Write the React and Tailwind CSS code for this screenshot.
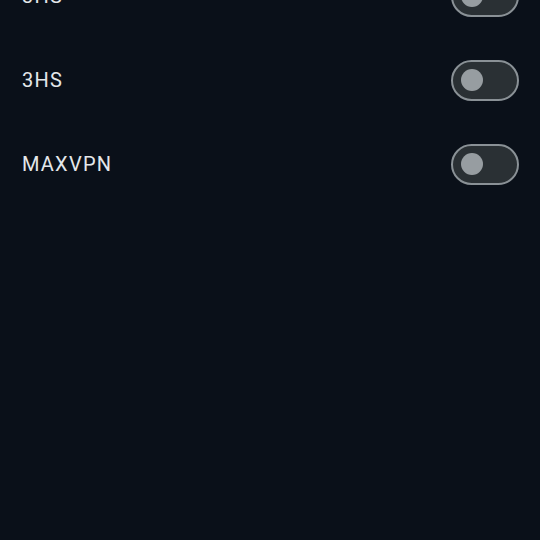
import React, { useState } from "react";

const ITEMS = [
  { id: "a", name: "3HS" },
  { id: "b", name: "3HS" },
  { id: "c", name: "MAXVPN" },
];

const Toggle = ({ on, onClick }) => (
  <button
    onClick={onClick}
    className={`w-[68px] h-[41px] rounded-full border-2 flex items-center px-[8px] ${
      on ? "border-[#7fb0d8] bg-[#2d4a60] justify-end" : "border-[#8a9196] bg-[#2a3034] justify-start"
    }`}
  >
    <span className={`w-[22px] h-[22px] rounded-full ${on ? "bg-[#cfe4f5]" : "bg-[#979da1]"}`} />
  </button>
);

const App = () => {
  const [enabled, setEnabled] = useState({});

  return (
    <div className="w-[540px] h-[540px] overflow-hidden bg-[#0a1019] font-['Roboto',sans-serif]">
      <div className="-mt-[46px]">
        {ITEMS.map((item) => (
          <div key={item.id} className="h-[84px] flex items-center justify-between pl-[22px] pr-[21px]">
            <span className="text-[20px] tracking-[1.2px] text-[#e4e7ea]">{item.name}</span>
            <Toggle
              on={!!enabled[item.id]}
              onClick={() => setEnabled((prev) => ({ ...prev, [item.id]: !prev[item.id] }))}
            />
          </div>
        ))}
      </div>
    </div>
  );
};

export default App;
